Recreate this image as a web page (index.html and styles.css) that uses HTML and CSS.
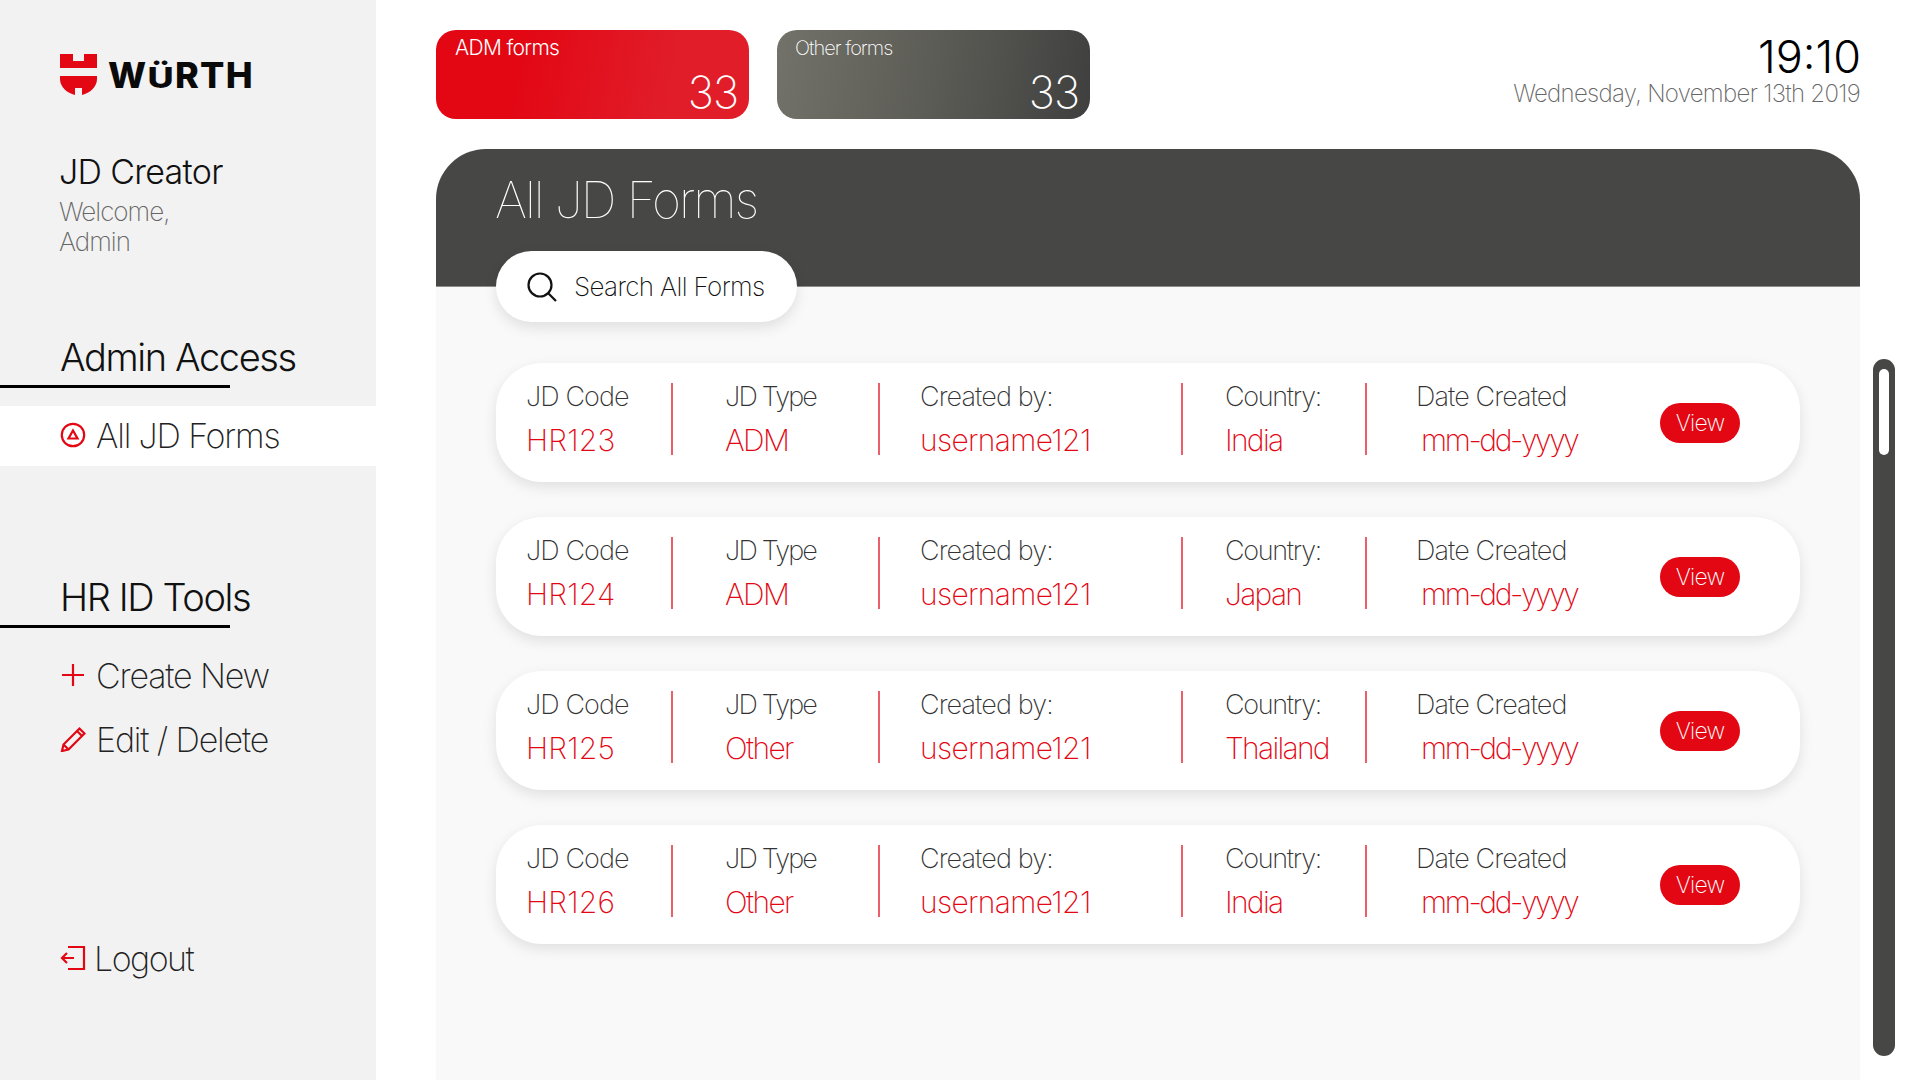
FILE: index.html
```html
<!DOCTYPE html>
<html>
<head>
    <meta charset="UTF-8">
    <link rel="stylesheet" href="styles.css">
</head>

<body>
    <aside class="sidebar">
        <div class="logo">
            <svg class="logo-shield" viewBox="0 0 37 41">
                <path d="M0 0H13V7H24V0H37V14H0Z" />
                <path d="M0 22H37V25C37 33 30 39 22 41V34H15V41C7 39 0 33 0 25Z" />
            </svg>
            <span class="logo-word">W<span class="logo-u">Ü</span>RTH</span>
        </div>

        <div class="app-name">JD Creator</div>
        <div class="welcome">Welcome,<br>Admin</div>

        <h2 class="nav-title nav-title-admin">Admin Access</h2>
        <a class="nav-item active">
            <svg class="nav-icon" viewBox="0 0 26 26">
                <circle cx="13" cy="13" r="11.2" />
                <path d="M13 8.500L17.500 16.500H8.500Z" />
            </svg>
            All JD Forms
        </a>

        <h2 class="nav-title nav-title-hr">HR ID Tools</h2>
        <a class="nav-item">
            <svg class="nav-icon" viewBox="0 0 26 26">
                <path d="M13 2V24M2 13H24" />
            </svg>
            Create New
        </a>
        <a class="nav-item">
            <svg class="nav-icon" viewBox="0 0 26 26">
                <path d="M2 25L3.500 18.500L19.500 2.500L24.500 7.500L8.500 23.500ZM3.500 18.500L8.500 23.500M17 5L22 10" />
            </svg>
            Edit / Delete
        </a>

        <a class="nav-item logout">
            <svg class="nav-icon" viewBox="0 0 26 26">
                <path d="M8 2H24V24H8M14 13H2M7 8L2 13L7 18" />
            </svg>
            Logout
        </a>
    </aside>

    <main class="main">
        <header class="topbar">
            <div class="stat stat-red">
                <div class="stat-name">ADM forms</div>
                <div class="stat-count">33</div>
            </div>
            <div class="stat stat-grey">
                <div class="stat-name">Other forms</div>
                <div class="stat-count">33</div>
            </div>
            <div class="clock">
                <div class="clock-time">19:10</div>
                <div class="clock-date">Wednesday, November 13th 2019</div>
            </div>
        </header>

        <section class="panel">
            <div class="panel-head">
                <h1 class="panel-title">All JD Forms</h1>
                <div class="search">
                    <svg class="search-icon" viewBox="0 0 30 30">
                        <circle cx="13" cy="13" r="11.500" />
                        <path d="M21.500 21.500L29 29" />
                    </svg>
                    Search All Forms
                </div>
            </div>

            <div class="rows">
                <div class="row">
                    <div class="cell cell-code"><span class="label">JD Code</span><span class="value">HR123</span></div>
                    <div class="cell cell-type"><span class="label">JD Type</span><span class="value">ADM</span></div>
                    <div class="cell cell-user"><span class="label">Created by:</span><span class="value">username121</span></div>
                    <div class="cell cell-country"><span class="label">Country:</span><span class="value">India</span></div>
                    <div class="cell cell-date"><span class="label">Date Created</span><span class="value">mm-dd-yyyy</span></div>
                    <button class="view">View</button>
                </div>
                <div class="row">
                    <div class="cell cell-code"><span class="label">JD Code</span><span class="value">HR124</span></div>
                    <div class="cell cell-type"><span class="label">JD Type</span><span class="value">ADM</span></div>
                    <div class="cell cell-user"><span class="label">Created by:</span><span class="value">username121</span></div>
                    <div class="cell cell-country"><span class="label">Country:</span><span class="value">Japan</span></div>
                    <div class="cell cell-date"><span class="label">Date Created</span><span class="value">mm-dd-yyyy</span></div>
                    <button class="view">View</button>
                </div>
                <div class="row">
                    <div class="cell cell-code"><span class="label">JD Code</span><span class="value">HR125</span></div>
                    <div class="cell cell-type"><span class="label">JD Type</span><span class="value">Other</span></div>
                    <div class="cell cell-user"><span class="label">Created by:</span><span class="value">username121</span></div>
                    <div class="cell cell-country"><span class="label">Country:</span><span class="value">Thailand</span></div>
                    <div class="cell cell-date"><span class="label">Date Created</span><span class="value">mm-dd-yyyy</span></div>
                    <button class="view">View</button>
                </div>
                <div class="row">
                    <div class="cell cell-code"><span class="label">JD Code</span><span class="value">HR126</span></div>
                    <div class="cell cell-type"><span class="label">JD Type</span><span class="value">Other</span></div>
                    <div class="cell cell-user"><span class="label">Created by:</span><span class="value">username121</span></div>
                    <div class="cell cell-country"><span class="label">Country:</span><span class="value">India</span></div>
                    <div class="cell cell-date"><span class="label">Date Created</span><span class="value">mm-dd-yyyy</span></div>
                    <button class="view">View</button>
                </div>
            </div>
        </section>
    </main>

    <div class="scrollbar">
        <div class="scrollbar-thumb"></div>
    </div>
</body>
</html>
```

FILE: styles.css
```css
* {
    box-sizing: border-box;
}

body {
    display: flex;
    width: 1920px;
    height: 1080px;
    margin: 0;
    overflow: hidden;
    background: #fff;
    font-family: "Inter", "Liberation Sans", sans-serif;
    font-weight: 300;
    color: #222;
}

/* sidebar */

.sidebar {
    display: flex;
    flex-direction: column;
    flex: none;
    width: 376px;
    height: 1080px;
    padding-top: 54px;
    background: #f2f2f2;
}

.logo {
    display: flex;
    align-items: flex-start;
    height: 41px;
    margin-left: 60px;
}

.logo-shield {
    flex: none;
    width: 37px;
    height: 41px;
    fill: #e30613;
}

.logo-word {
    margin: 1px 0 0 11px;
    font-size: 36px;
    font-weight: 800;
    line-height: 41px;
    letter-spacing: 1.3px;
    color: #0a0a0a;
}

.logo-u {
    display: inline-block;
    transform: scaleY(0.8);
    transform-origin: 50% 78%;
}

.app-name {
    margin: 56px 0 0 59px;
    font-size: 34px;
    font-weight: 300;
    line-height: 42px;
    letter-spacing: -0.7px;
    color: #111;
}

.welcome {
    margin: 4px 0 0 59px;
    font-size: 26px;
    font-weight: 200;
    line-height: 30px;
    letter-spacing: -1px;
    color: #666;
}

.nav-title {
    width: 230px;
    margin: 0;
    padding: 0 0 10px 60px;
    border-bottom: 3px solid #000;
    font-size: 38px;
    font-weight: 300;
    line-height: 36px;
    letter-spacing: -1.4px;
    white-space: nowrap;
    color: #111;
}

.nav-title-admin {
    margin-top: 82px;
}

.nav-title-hr {
    margin-top: 113px;
}

.nav-item {
    display: flex;
    align-items: center;
    gap: 10px;
    height: 60px;
    padding: 0 0 2px 60px;
    font-size: 34px;
    font-weight: 200;
    letter-spacing: -1.15px;
    color: #222;
}

.nav-title + .nav-item {
    margin-top: 18px;
}

.nav-item.active {
    background: #fff;
}

.nav-icon {
    flex: none;
    width: 26px;
    height: 26px;
    fill: none;
    stroke: #e30613;
    stroke-width: 2.2;
}

.nav-item + .nav-item {
    margin-top: 4px;
}

.nav-item.logout {
    gap: 8px;
    margin-top: auto;
    margin-bottom: 91px;
    letter-spacing: -1.5px;
}

/* main column */

.main {
    flex: none;
    width: 1424px;
    margin-left: 60px;
}

.topbar {
    display: flex;
    height: 149px;
    padding-top: 30px;
}

.stat {
    width: 313px;
    height: 89px;
    margin-right: 28px;
    padding: 5px 11px 0 19px;
    border-radius: 20px;
    color: #fff;
}

.stat-red {
    background: linear-gradient(100deg, #e30613 25%, #e11d2a 75%);
}

.stat-grey {
    padding-left: 18px;
    background: linear-gradient(100deg, #72726a 0%, #5c5c56 50%, #3f3f3f 100%);
}

.stat-name {
    font-size: 21px;
    font-weight: 300;
    line-height: 26px;
    letter-spacing: -0.65px;
}

.stat-grey .stat-name {
    font-size: 20px;
    font-weight: 200;
    letter-spacing: -1px;
}

.stat-count {
    margin-top: 6px;
    font-size: 44px;
    font-weight: 200;
    line-height: 50px;
    letter-spacing: -1px;
    text-align: right;
}

.clock {
    margin-left: auto;
    text-align: right;
}

.clock-time {
    margin: 2px -1px 0 0;
    font-size: 45px;
    font-weight: 300;
    line-height: 50px;
    color: #000;
}

.clock-date {
    margin-top: -3px;
    font-size: 24px;
    font-weight: 200;
    line-height: 30px;
    letter-spacing: -0.7px;
    color: #666;
}

.panel {
    height: 931px;
    background: #f9f9f9;
    border-radius: 50px 50px 0 0;
}

.panel-head {
    height: 138px;
    padding: 21px 0 0 59px;
    background: #474745;
    border-bottom: 1px solid #8c8c8a;
    border-radius: 50px 50px 0 0;
}

.panel-title {
    margin: 0;
    font-size: 50px;
    font-weight: 100;
    line-height: 60px;
    letter-spacing: -1.95px;
    color: #fff;
}

.search {
    display: flex;
    align-items: center;
    gap: 17px;
    width: 301px;
    height: 71px;
    margin: 21px 0 0 1px;
    padding-left: 31px;
    background: #fff;
    border-radius: 36px;
    box-shadow: 0 6px 14px rgba(0, 0, 0, 0.1);
    font-size: 26px;
    font-weight: 200;
    letter-spacing: -0.65px;
    color: #111;
}

.search-icon {
    flex: none;
    width: 30px;
    height: 30px;
    fill: none;
    stroke: #111;
    stroke-width: 2.2;
}

.rows {
    display: flex;
    flex-direction: column;
    gap: 35px;
    margin: 76px 0 0 60px;
}

.row {
    display: flex;
    width: 1304px;
    height: 119px;
    padding: 20px 60px 0 30px;
    background: #fff;
    border-radius: 46px;
    box-shadow: 0 5px 14px rgba(0, 0, 0, 0.1);
}

.cell {
    display: flex;
    flex-direction: column;
    flex: none;
    height: 72px;
    border-right: 2px solid #e9606a;
}

.cell-code {
    width: 147px;
}

.cell-type {
    width: 207px;
    padding-left: 52px;
}

.cell-user {
    width: 303px;
    padding-left: 40px;
}

.cell-country {
    width: 184px;
    padding-left: 42px;
}

.cell-date {
    padding-left: 49px;
    border-right: 0;
}

.label {
    font-size: 27px;
    font-weight: 200;
    line-height: 28px;
    letter-spacing: -0.9px;
    white-space: nowrap;
    color: #333;
}

.cell-type .label {
    letter-spacing: -1.8px;
}

.cell-country .label {
    letter-spacing: -1.3px;
}

.value {
    margin-top: 14px;
    font-size: 30px;
    font-weight: 200;
    line-height: 30px;
    letter-spacing: -1.1px;
    color: #e30613;
}

.cell-code .value {
    letter-spacing: 0.2px;
}

.cell-type .value {
    letter-spacing: -1.6px;
}

.cell-user .value {
    letter-spacing: -0.65px;
}

.cell-country .value {
    letter-spacing: -1.7px;
}

.cell-date .value {
    margin-left: 5px;
    letter-spacing: -2.4px;
}

.view {
    align-self: center;
    width: 80px;
    height: 40px;
    margin: -20px 0 0 auto;
    padding: 0;
    border: none;
    border-radius: 20px;
    background: #e30613;
    font-family: inherit;
    font-size: 23px;
    font-weight: 200;
    letter-spacing: -0.8px;
    color: #fff;
}

/* scrollbar */

.scrollbar {
    flex: none;
    align-self: flex-start;
    width: 22px;
    height: 697px;
    margin: 359px 0 0 13px;
    padding: 10px 6px 0;
    background: #474745;
    border-radius: 11px;
}

.scrollbar-thumb {
    height: 86px;
    background: #fff;
    border-radius: 5px;
}
```
